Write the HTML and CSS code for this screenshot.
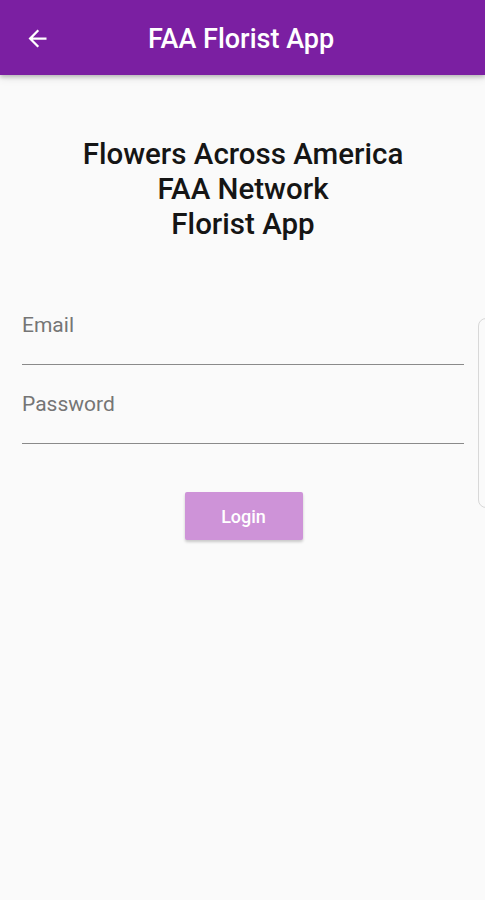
FILE: index.html
```html
<!DOCTYPE html>
<html>
<head>
<meta charset="utf-8">
<link rel="stylesheet" href="styles.css">
</head>
<body>
<header class="appbar">
  <svg class="back" viewBox="0 0 24 24" width="27" height="27"><path d="M20 11H7.83l5.59-5.59L12 4l-8 8 8 8 1.41-1.41L7.83 13H20v-2z" fill="#fff"/></svg>
  <h1 class="title">FAA Florist App</h1>
</header>
<main class="content">
  <h2 class="heading">Flowers Across America<br>FAA Network<br>Florist App</h2>
  <form class="form">
    <div class="field field-email"><span class="label">Email</span></div>
    <div class="field"><span class="label">Password</span></div>
    <div class="actions"><button type="button" class="login">Login</button></div>
  </form>
  <div class="sidecard"></div>
</main>
</body>
</html>
```
FILE: styles.css
```css
html, body {
  margin: 0;
  padding: 0;
  background: #fafafa;
  font-family: Roboto, "Liberation Sans", sans-serif;
  height: 900px;
  overflow: hidden;
}
.appbar {
  height: 75px;
  background: #7b1fa2;
  display: flex;
  align-items: center;
  position: relative;
  z-index: 2;
  box-shadow: 0 2px 4px rgba(0,0,0,0.22), 0 4px 8px rgba(0,0,0,0.08);
}
.back {
  margin-left: 24px;
  margin-top: 1px;
}
.title {
  margin: 0 0 0 97px;
  color: #fff;
  font-size: 27px;
  font-weight: 500;
  margin-top: 2px;
}
.content {
  position: relative;
  padding: 62px 21px 0 22px;
  height: 825px;
  box-sizing: border-box;
  overflow: hidden;
}
.heading {
  margin: 0;
  text-align: center;
  font-size: 29.5px;
  font-weight: 500;
  line-height: 35px;
  color: #151515;
}
.form {
  margin: 0;
}
.field {
  padding: 27px 0 27px;
  border-bottom: 1.5px solid #8a8a8a;
}
.field-email {
  padding-top: 71px;
}
.label {
  display: block;
  font-size: 21px;
  line-height: 24px;
  color: #757575;
}
.actions {
  display: flex;
  justify-content: center;
  margin-top: 48px;
}
.login {
  width: 118px;
  height: 48px;
  border: none;
  border-radius: 2px;
  background: #ce93d8;
  color: #fff;
  font-family: Roboto, "Liberation Sans", sans-serif;
  font-size: 18px;
  font-weight: 500;
  box-shadow: 0 2px 3px rgba(0,0,0,0.2);
  margin-left: 1px;
}
.sidecard {
  position: absolute;
  left: 478px;
  top: 243px;
  width: 30px;
  height: 188px;
  border: 1px solid #d8d8d8;
  border-radius: 8px;
  background: #fafafa;
}
```
